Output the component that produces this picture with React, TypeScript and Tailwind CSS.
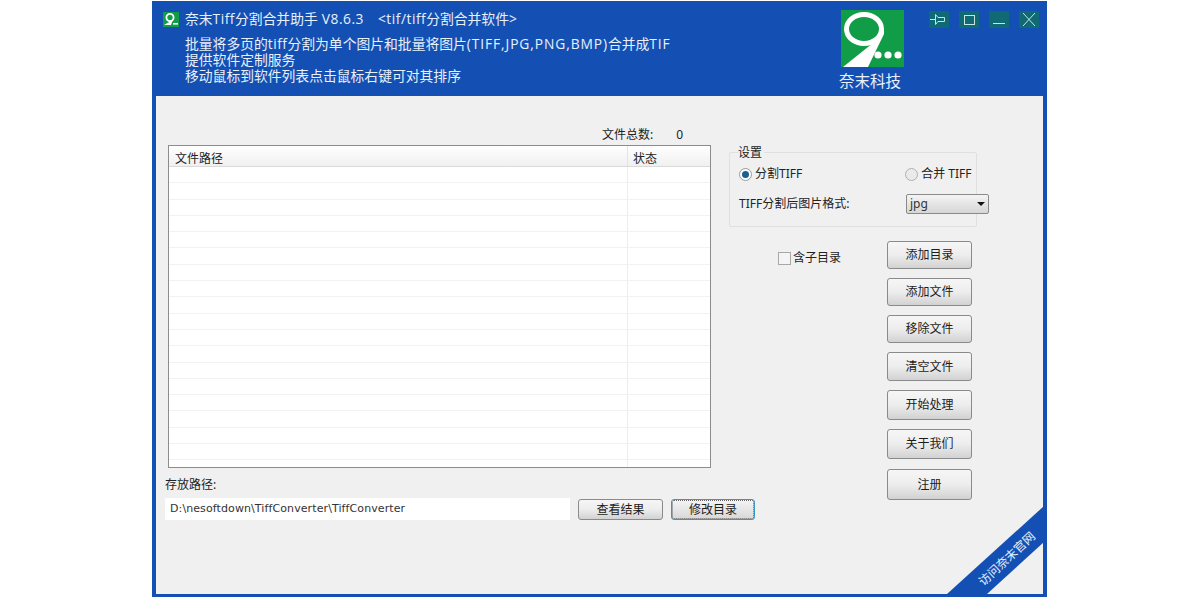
const FONT = "font-['Noto_Sans','Noto_Sans_CJK_SC',sans-serif]";

const SIDE_BUTTONS = [
  { label: '添加目录', cls: 'h-[28px]' },
  { label: '添加文件', cls: 'h-[28px] mt-[9px]' },
  { label: '移除文件', cls: 'h-[28px] mt-[9px]' },
  { label: '清空文件', cls: 'h-[29px] mt-[9px]' },
  { label: '开始处理', cls: 'h-[30px] mt-[9px]' },
  { label: '关于我们', cls: 'h-[30px] mt-[9px]' },
  { label: '注册', cls: 'h-[31px] mt-[10px]' },
];

function Btn({ label, cls }: { label: string; cls: string }) {
  return (
    <button className={`flex shrink-0 items-center justify-center rounded-[3px] border border-[#8a8a8a] bg-gradient-to-b from-[#f6f6f6] via-[#ededed] to-[#d2d2d2] text-[12px] text-[#1c1c1c] ${cls}`}>
      {label}
    </button>
  );
}

function Logo() {
  return (
    <svg width="63" height="57" viewBox="0 0 63 57" className="block">
      <rect width="63" height="57" fill="#119c48" />
      <ellipse cx="23" cy="19" rx="17.5" ry="14.5" fill="none" stroke="#fff" strokeWidth="5" />
      <path d="M2 57 L27 37 L38 28 L43 19 L43 24 L27 57 Z" fill="#fff" />
      <circle cx="37" cy="45" r="3.6" fill="#fff" />
      <circle cx="47" cy="45" r="3.6" fill="#fff" />
      <circle cx="57" cy="45" r="3.6" fill="#fff" />
    </svg>
  );
}

function WinBtn({ children }: { children: React.ReactNode }) {
  return (
    <div className="flex h-[17px] w-[20px] items-center justify-center bg-[#0f6a76]">{children}</div>
  );
}

export default function App() {
  return (
    <div className={`h-[600px] w-[1200px] overflow-hidden bg-white pt-[1px] pl-[152px] ${FONT}`}>
      <div className="relative flex h-[596px] w-[895px] flex-col bg-[#1450b4] px-[4px] pb-[3px]">
        {/* header */}
        <div className="flex h-[95px] shrink-0 text-[#e8f0fa]">
          <div className="w-[680px] pl-[7px] pt-[10px] font-['Open_Sans','Noto_Sans_CJK_SC',sans-serif]">
            <div className="flex h-[16px] items-center text-[13.8px] whitespace-pre">
              <svg width="16" height="15" viewBox="0 0 16 15" className="mr-[6px] shrink-0">
                <rect width="16" height="15" fill="#119c48" />
                <circle cx="7" cy="5.5" r="3.6" fill="none" stroke="#fff" strokeWidth="1.8" />
                <path d="M1 13 L8 9 L10.5 6 L8 13 Z" fill="#fff" />
                <rect x="10" y="11" width="5" height="1.6" fill="#fff" />
              </svg>
              <span>
                奈末<span className="tracking-[0.5px]">Tiff</span>分割合并助手<span className="tracking-[0.5px]"> V8.6.3</span>
              </span>
              <span className="ml-[14px]">
                <span className="tracking-[0.5px]">&lt;tif/tiff</span>分割合并软件&gt;
              </span>
            </div>
            <div className="mt-[9px] pl-[22px] text-[13.8px] leading-[16px] whitespace-nowrap">
              <div>
                批量将多页的<span className="tracking-[0.5px]">tiff</span>分割为单个图片和批量将图片
                <span className="tracking-[0.9px]">(TIFF,JPG,PNG,BMP)</span>合并成<span className="tracking-[0.9px]">TIF</span>
              </div>
              <div>提供软件定制服务</div>
              <div>移动鼠标到软件列表点击鼠标右键可对其排序</div>
            </div>
          </div>
          <div className="w-[66px] pt-[9px]">
            <div className="ml-[5px]">
              <Logo />
            </div>
            <div className="mt-[4px] ml-[3px] text-[15.5px] leading-[20px] whitespace-nowrap">奈末科技</div>
          </div>
          <div className="ml-[27px] flex gap-[10px] pt-[10px]">
            <WinBtn>
              <svg width="20" height="17" viewBox="0 0 20 17" fill="none" stroke="#c4e6e0" strokeWidth="1">
                <path d="M1 8.5H6M6.5 3.5V13.5L9 10.5H15.5V6.5H9L6.5 3.5Z" />
              </svg>
            </WinBtn>
            <WinBtn>
              <div className="h-[10px] w-[11px] border border-[#c4e6e0]" />
            </WinBtn>
            <WinBtn>
              <div className="mt-[8px] h-[1px] w-[12px] bg-[#c4e6e0]" />
            </WinBtn>
            <WinBtn>
              <svg width="18" height="17" viewBox="0 0 18 17" fill="none" stroke="#c4e6e0" strokeWidth="1">
                <path d="M3 2L15 15M15 2L3 15" />
              </svg>
            </WinBtn>
          </div>
        </div>

        {/* body */}
        <div className="flex min-h-0 flex-1 bg-[#f0f0f0] text-[12px] text-[#222]">
          <div className="w-[573px] shrink-0 pl-[9px] pt-[31px]">
            <div className="ml-[3px] flex h-[16px] w-[543px] items-center">
              <span className="ml-[434px]">文件总数:</span>
              <span className="ml-[23px]">0</span>
            </div>
            <div className="ml-[3px] mt-[2px] flex h-[323px] w-[543px] flex-col overflow-hidden border border-[#8c8c8c] bg-white">
              <div className="flex h-[21px] shrink-0 border-b border-[#dadada] bg-gradient-to-b from-white to-[#f0f0f0]">
                <div className="flex w-[458px] items-center pt-[5px] pl-[6px]">文件路径</div>
                <div className="flex flex-1 items-center border-l border-[#e4e4e4] pt-[5px] pl-[5px]">状态</div>
              </div>
              {Array.from({ length: 19 }).map((_, i) => (
                <div key={i} className="flex h-[16.3px] shrink-0 border-b border-[#f2f2f2]">
                  <div className="w-[458px]" />
                  <div className="flex-1 border-l border-[#ededed]" />
                </div>
              ))}
            </div>
            <div className="mt-[9px] h-[16px] leading-[16px]">存放路径:</div>
            <div className="mt-[5px] flex w-[590px] items-center">
              <div className="flex h-[22px] w-[405px] shrink-0 items-center bg-white pl-[5px] font-['DejaVu_Sans','Noto_Sans_CJK_SC',sans-serif] text-[11px] tracking-[0.1px] text-[#333]">
                D:\nesoftdown\TiffConverter\TiffConverter
              </div>
              <Btn label="查看结果" cls="ml-[8px] h-[21px] w-[85px] mt-[1px]" />
              <button className="mt-[1px] ml-[8px] flex h-[21px] w-[84px] shrink-0 items-center justify-center rounded-[3px] border border-[#3d95c4] bg-gradient-to-b from-[#f4f4f4] to-[#d8d8d8] text-[12px] text-[#1c1c1c] outline-1 -outline-offset-2 outline-dotted outline-[#666]">
                修改目录
              </button>
            </div>
          </div>

          <div className="min-w-0 flex-1 pt-[56px]">
            <div className="relative h-[75px] w-[248px] rounded-[2px] border border-[#e0e0e0] pl-[9px] pt-[12px]">
              <span className="absolute top-[-8px] left-[8px] bg-[#f0f0f0] pr-[2px] leading-[16px]">设置</span>
              <div className="flex items-center whitespace-nowrap">
                <span className="h-[13px] w-[13px] rounded-full border border-[#9a9a9a] bg-white p-[2px]">
                  <span className="block h-[7px] w-[7px] rounded-full bg-[#17608f]" />
                </span>
                <span className="ml-[3px]">分割TIFF</span>
                <span className="ml-[103px] h-[13px] w-[13px] rounded-full border border-[#b0b0b0] bg-[#eaeaea]" />
                <span className="ml-[3px]">合并 TIFF</span>
              </div>
              <div className="mt-[11px] flex w-[260px] items-center">
                <span className="w-[167px] shrink-0 whitespace-nowrap">TIFF分割后图片格式:</span>
                <div className="flex h-[20px] w-[83px] shrink-0 items-center rounded-[2px] border border-[#8a8a8a] bg-gradient-to-b from-[#f4f4f4] to-[#d6d6d6] pl-[3px] text-[#333]">
                  <span className="flex-1">jpg</span>
                  <span className="mr-[3px] h-0 w-0 border-x-[4px] border-t-[4px] border-x-transparent border-t-[#111]" />
                </div>
              </div>
            </div>
            <div className="mt-[14px] flex">
              <div className="ml-[49px] flex h-[34px] w-[109px] items-center">
                <span className="h-[13px] w-[13px] border border-[#a8a8a8] bg-[#f4f4f4]" />
                <span className="ml-[2px]">含子目录</span>
              </div>
              <div className="flex w-[85px] flex-col">
                {SIDE_BUTTONS.map((b) => (
                  <Btn key={b.label} label={b.label} cls={b.cls} />
                ))}
              </div>
            </div>
          </div>
        </div>

        {/* corner ribbon */}
        <div className="absolute right-[3px] bottom-[3px] h-[88px] w-[97px] overflow-hidden">
          <svg width="97" height="88" viewBox="0 0 97 88" className="absolute inset-0">
            <polygon points="97,0 97,36 40,88 0,88" fill="#1450b4" />
          </svg>
          <span className="absolute top-[46px] left-[24px] block w-[72px] -rotate-[43deg] text-center text-[12px] leading-[14px] whitespace-nowrap text-[#e8f0fa]">
            访问奈末官网
          </span>
        </div>
      </div>
    </div>
  );
}
